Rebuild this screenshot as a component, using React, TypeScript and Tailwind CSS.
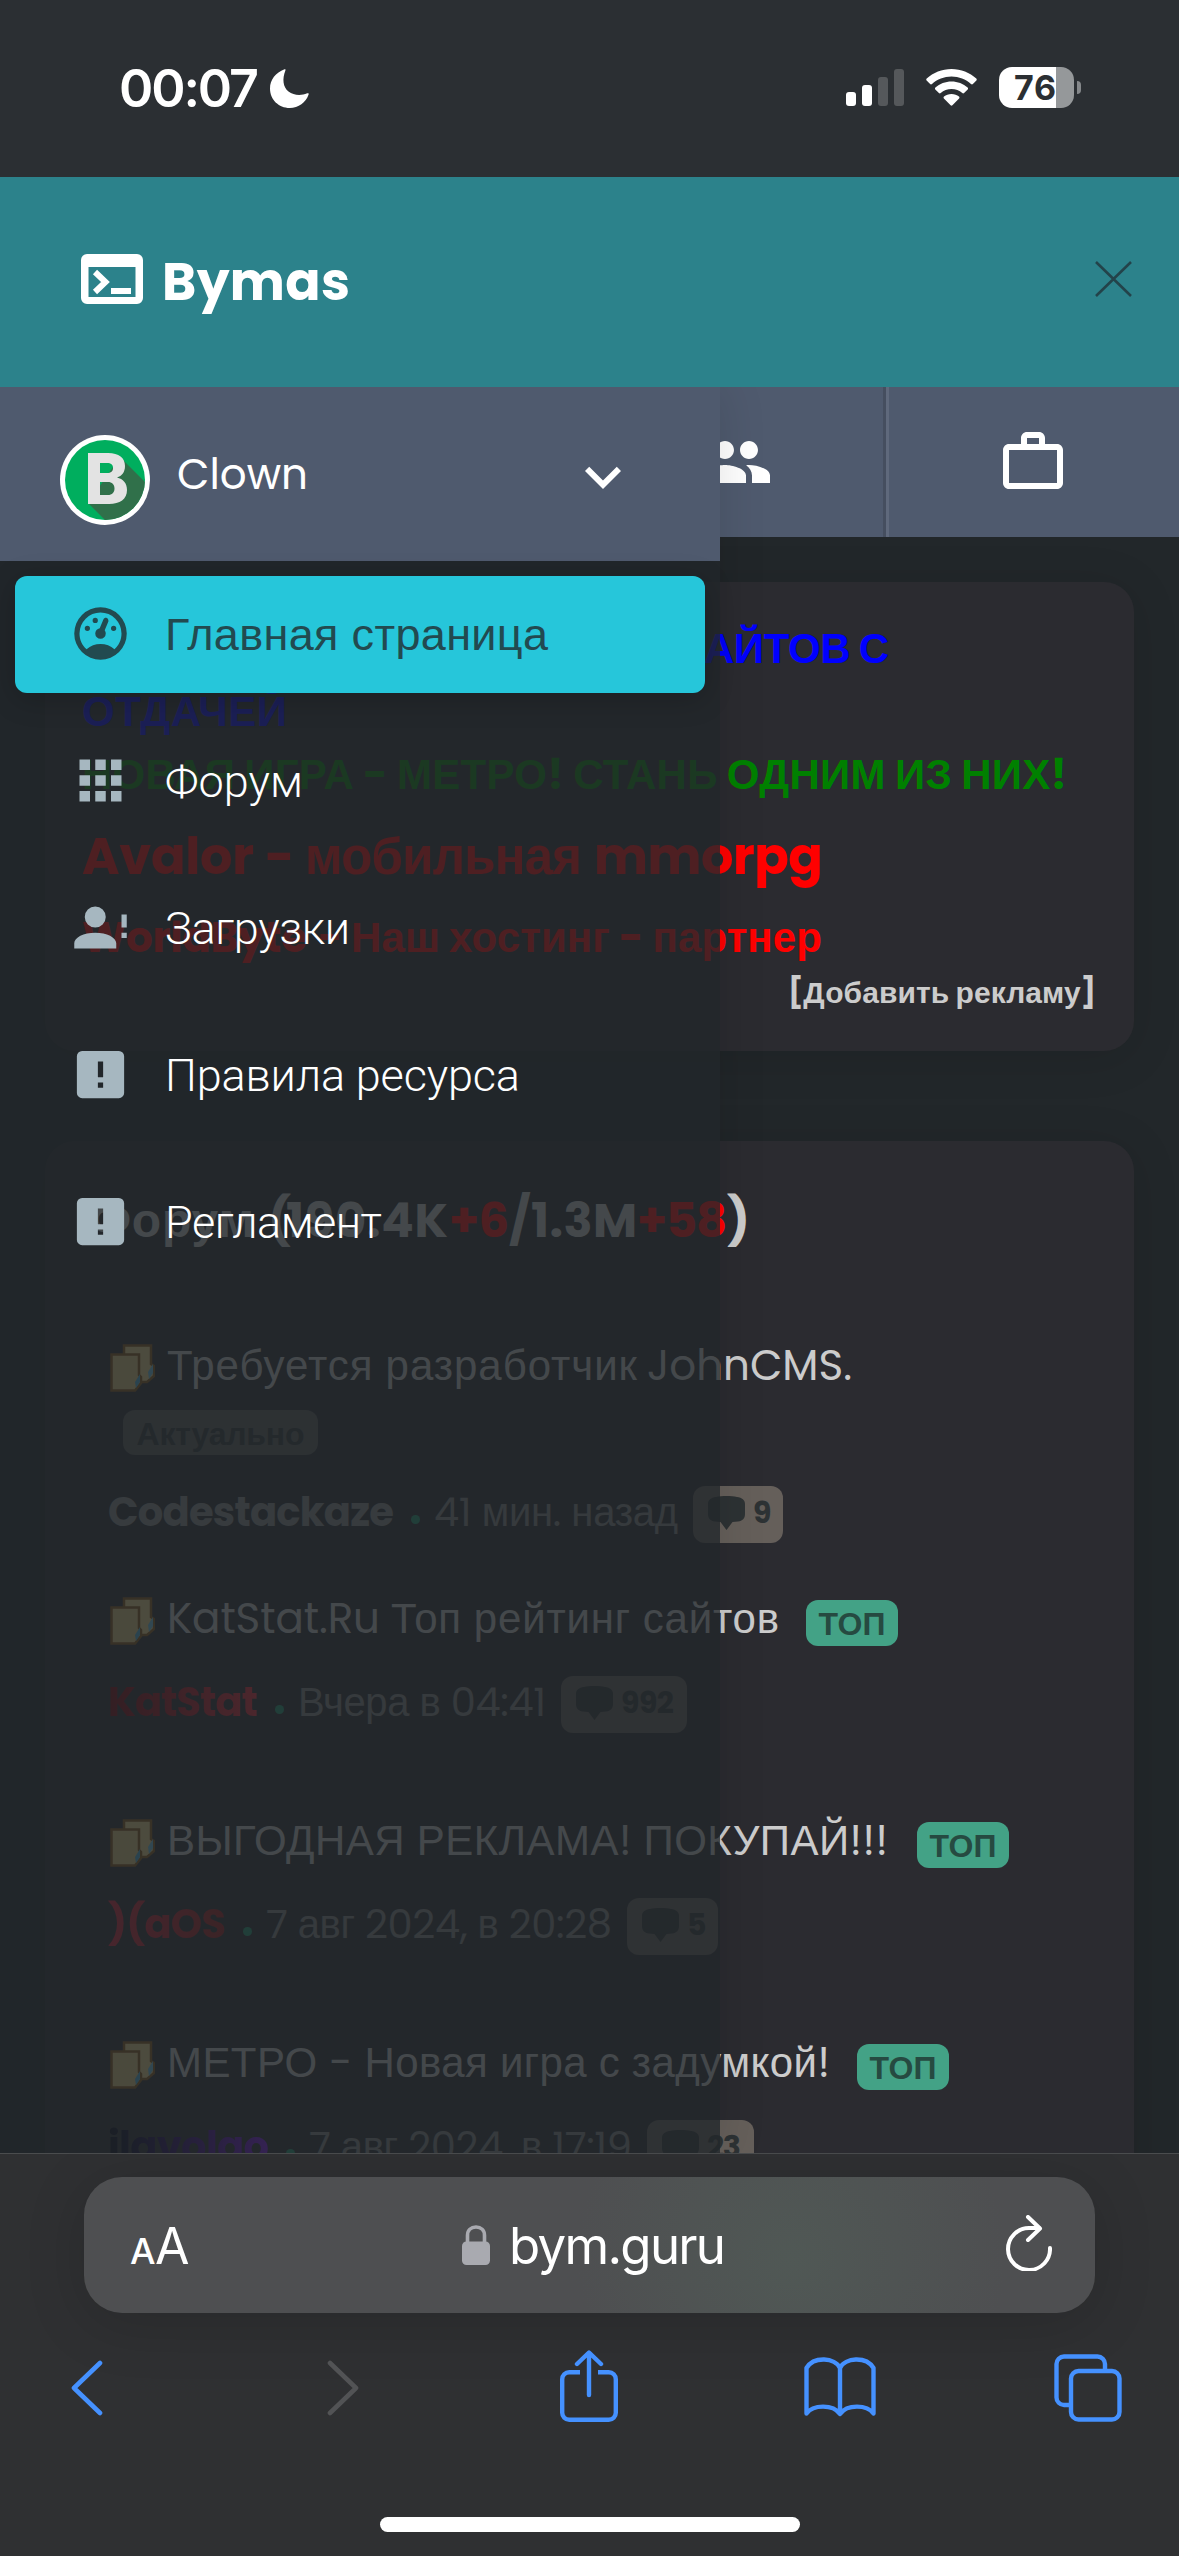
import { useLayoutEffect, useRef, useState } from "react";
import type { ReactNode } from "react";
import { MdPeople, MdWorkOutline, MdKeyboardArrowDown } from "react-icons/md";
import clsx from "clsx";

const inter = "[font-family:Inter,sans-serif]";
// Poppins has no Cyrillic, those letters come from the second family
const poppins = "[font-family:Poppins,'Liberation_Sans',Arial,sans-serif]";

type FitProps = { w: number; children: string; className?: string };

// Spreads or tightens the letters so that the run fills exactly w pixels
function Fit({ w, children, className }: FitProps) {
  const ref = useRef<HTMLSpanElement>(null);
  const [spacing, setSpacing] = useState(0);

  useLayoutEffect(() => {
    const natural = ref.current?.getBoundingClientRect().width ?? w;
    setSpacing((w - natural) / Math.max(children.length - 1, 1));
  }, [w, children]);

  return (
    <span className={clsx("block shrink-0 whitespace-pre", className)} style={{ width: w }}>
      <span ref={ref} style={{ letterSpacing: spacing }}>
        {children}
      </span>
    </span>
  );
}

const icons = {
  gauge:
    "M17.3,18C19,16.5 20,14.4 20,12A8,8 0 0,0 12,4A8,8 0 0,0 4,12C4,14.4 5,16.5 6.7,18C8.2,16.7 10,16 12,16C14,16 15.9,16.7 17.3,18M12,2A10,10 0 0,1 22,12A10,10 0 0,1 12,22A10,10 0 0,1 2,12A10,10 0 0,1 12,2M7,9A1,1 0 0,1 8,10A1,1 0 0,1 7,11A1,1 0 0,1 6,10A1,1 0 0,1 7,9M10,6A1,1 0 0,1 11,7A1,1 0 0,1 10,8A1,1 0 0,1 9,7A1,1 0 0,1 10,6M17,9A1,1 0 0,1 18,10A1,1 0 0,1 17,11A1,1 0 0,1 16,10A1,1 0 0,1 17,9M14.4,6.1C14.9,6.3 15.1,6.9 15,7.4L13.6,10.8C13.8,11.1 14,11.5 14,12A2,2 0 0,1 12,14A2,2 0 0,1 10,12C10,11 10.7,10.2 11.7,10L13.1,6.7C13.3,6.1 13.9,5.9 14.4,6.1Z",
  apps: "M16,20H20V16H16M16,14H20V10H16M10,8H14V4H10M16,8H20V4H16M10,14H14V10H10M4,14H8V10H4M4,20H8V16H4M10,20H14V16H10M4,8H8V4H4V8Z",
  account:
    "M10,4A4,4 0 0,1 14,8A4,4 0 0,1 10,12A4,4 0 0,1 6,8A4,4 0 0,1 10,4M10,14C14.42,14 18,15.79 18,18V20H2V18C2,15.79 5.58,14 10,14M20,12V7H22V12H20M20,16V14H22V16H20Z",
  alert:
    "M5,3H19A2,2 0 0,1 21,5V19A2,2 0 0,1 19,21H5A2,2 0 0,1 3,19V5A2,2 0 0,1 5,3M13,13V7H11V13H13M13,17V15H11V17H13Z",
};

const menu = [
  { icon: icons.gauge, label: "Главная страница", w: 383, active: true },
  { icon: icons.apps, label: "Форум", w: 138 },
  { icon: icons.account, label: "Загрузки", w: 185 },
  { icon: icons.alert, label: "Правила ресурса", w: 355 },
  { icon: icons.alert, label: "Регламент", w: 217 },
];

function StatusBar() {
  return (
    <div className="flex h-[177px] shrink-0 items-start bg-[#2b2f33] pt-[57px] pr-[98px] pl-[119px] text-white">
      <Fit w={140} className={`${inter} text-[52px] leading-[63px] font-semibold`}>
        00:07
      </Fit>
      <svg className="mt-[12px] ml-[11px] h-[39px] w-[39px]" viewBox="0 0 39 39" fill="currentColor">
        <path d="M14.5 0.3C15.3 0 15.8 0.6 15.4 1.4C12 10 13 18 18.500 22.500C23.500 26.500 31 27 37.200 24.300C38.300 23.900 39 24.500 38.600 25.500C35.800 33.500 28.500 39 19.800 39C8.600 39 0 30.500 0 19.500C0 10.800 5.700 3.500 14.500 0.300Z" />
      </svg>
      <svg className="mt-[12px] ml-auto h-[37px] w-[58px]" viewBox="0 0 58 37" fill="currentColor">
        <rect x="0" y="23" width="10" height="14" rx="3" />
        <rect x="16" y="16" width="10" height="21" rx="3" />
        <rect x="32" y="8" width="10" height="29" rx="3" fill="#55585b" />
        <rect x="48" y="0" width="10" height="37" rx="3" fill="#55585b" />
      </svg>
      <svg className="mt-[12px] ml-[22px] h-[37px] w-[51px]" viewBox="0 0 51 37" fill="currentColor">
        <path d="M25.500 0C16 0 7.200 3.600 0.700 9.600C0.100 10.200 0.100 11 0.600 11.500L4.100 15C4.600 15.500 5.400 15.500 6 15C11.200 10.300 18 7.500 25.500 7.500S39.800 10.300 45 15C45.600 15.500 46.400 15.500 46.900 15L50.400 11.500C50.900 11 50.900 10.200 50.300 9.600C43.800 3.600 35 0 25.500 0Z" />
        <path d="M25.500 12.500C19.400 12.500 13.700 14.800 9.400 18.600C8.800 19.100 8.800 19.900 9.300 20.500L12.900 24C13.400 24.500 14.200 24.500 14.700 24.100C17.600 21.600 21.400 20.100 25.500 20.100S33.400 21.600 36.300 24.100C36.800 24.500 37.600 24.500 38.100 24L41.700 20.500C42.200 19.900 42.200 19.100 41.600 18.600C37.300 14.800 31.600 12.500 25.500 12.500Z" />
        <path d="M25.500 25C22.600 25 20 26 18 27.600C17.400 28.100 17.400 28.900 17.900 29.400L24.600 36.300C25.100 36.800 25.900 36.800 26.400 36.300L33.100 29.400C33.600 28.900 33.600 28.100 33 27.600C31 26 28.400 25 25.500 25Z" />
      </svg>
      <div className="mt-[10px] ml-[22px] flex items-center">
        <div className="flex h-[41px] w-[75px] items-center rounded-[13px] bg-[linear-gradient(90deg,#fff_76%,#95989a_76%)] pl-[15px]">
          <Fit w={42} className={`${inter} text-[34px] leading-[41px] font-bold text-[#2b2f33]`}>
            76
          </Fit>
        </div>
        <div className="ml-[3px] h-[13px] w-[4px] rounded-r-full bg-[#85888b]" />
      </div>
    </div>
  );
}

function Header() {
  return (
    <div className="flex h-[210px] shrink-0 items-center bg-[#2c828b] pr-[47px] pl-[81px]">
      <svg className="-mt-[6px] h-[50px] w-[62px]" viewBox="0 0 62 50">
        <path
          fill="#fff"
          fillRule="evenodd"
          d="M6 0H56A6 6 0 0 1 62 6V44A6 6 0 0 1 56 50H6A6 6 0 0 1 0 44V6A6 6 0 0 1 6 0ZM7.500 13V43H54.500V13Z"
        />
        <path d="M14 18L24.500 28L14 38" fill="none" stroke="#fff" strokeWidth="6" />
        <path d="M30 34H50V40H30Z" fill="#fff" />
      </svg>
      <Fit w={188} className={`${poppins} ml-[19px] text-[52px] leading-[76px] font-bold text-white`}>
        Bymas
      </Fit>
      <svg className="-mt-[6px] ml-auto h-[36px] w-[37px]" viewBox="0 0 37 36" fill="none" stroke="#23434a" strokeWidth="2.6">
        <path d="M1 1L36 35M36 1L1 35" />
      </svg>
    </div>
  );
}

function Tabs() {
  return (
    <div className="grid h-[150px] shrink-0 grid-cols-4 bg-[#4f5a6e] text-white">
      <div />
      <div />
      <div className="flex items-center justify-center">
        <MdPeople size={72} />
      </div>
      <div className="ml-[2px] flex items-center justify-center border-l-[3px] border-[#5f697c] pr-[2px] shadow-[-3px_0_0_#454e5f]">
        <MdWorkOutline size={72} />
      </div>
    </div>
  );
}

function AdsCard() {
  return (
    <section
      className={`${poppins} mx-[45px] mt-[45px] h-[469px] shrink-0 rounded-[30px] bg-[#2b2b30] pt-[35px] pr-[38px] pl-[37px] font-bold shadow-[0_6px_48px_rgba(0,0,0,0.12)]`}
    >
      <div className="text-[42px] leading-[63px] text-[#0000ff]">
        <Fit w={214} className="ml-[593px]">
          САЙТОВ С
        </Fit>
        <Fit w={205}>ОТДАЧЕЙ</Fit>
      </div>
      <Fit w={985} className="text-[42px] leading-[63px] text-[#008000]">
        НОВАЯ ИГРА - МЕТРО! СТАНЬ ОДНИМ ИЗ НИХ!
      </Fit>
      <div className="mt-[12px] flex text-[51px] leading-[76px] text-[#ff0000]">
        <Fit w={172}>Avalor</Fit>
        <Fit w={25} className="ml-[11px]">-</Fit>
        <Fit w={277} className="ml-[15px]">мобильная</Fit>
        <Fit w={229} className="ml-[12px]">mmorpg</Fit>
      </div>
      <div className="mt-[12px] flex text-[42px] leading-[63px] text-[#ff0000]">
        <Fit w={225}>WorldByte</Fit>
        <Fit w={20} className="ml-[11px]">-</Fit>
        <Fit w={471} className="ml-[13px]">Наш хостинг - партнер</Fit>
      </div>
      <div className="mt-[1px] flex justify-end text-[30px] leading-[45px] text-[#cccccc]">
        <Fit w={308}>[Добавить рекламу]</Fit>
      </div>
    </section>
  );
}

function Docs() {
  return (
    <svg className="mt-[4px] mr-[12px] ml-[1px] h-[48px] w-[45px] shrink-0" viewBox="0 0 45 48">
      <path d="M14 1.500H41V20L44 22V32L37 38H14Z" fill="#f5d98c" stroke="#8c5a18" strokeWidth="2.500" />
      <path d="M1.500 10.500H29V31L31 33V39L25 46.500H1.500Z" fill="#eccf80" stroke="#8c5a18" strokeWidth="2.500" />
      <path d="M38 28L43 20V29L39 35Z" fill="#6fc7e8" />
      <path d="M25 38L30 30V38L26 44Z" fill="#4db4de" />
    </svg>
  );
}

function Top() {
  return (
    <span className="mt-[8px] flex h-[46px] w-[92px] shrink-0 items-center justify-center rounded-[12px] bg-[#43a286] pt-[2px]">
      <Fit w={67} className={`${poppins} text-[32px] leading-[46px] font-bold text-[#264a41]`}>
        ТОП
      </Fit>
    </span>
  );
}

function Count({ n, w }: { n: string; w: number }) {
  return (
    <span className="mt-[4px] flex h-[57px] shrink-0 items-center rounded-[12px] bg-[#655f5a] pr-[13px] pl-[15px] text-[#2d3234]">
      <svg className="mt-[-3px] h-[34px] w-[37px]" viewBox="0 0 37 34" fill="currentColor">
        <path d="M8 1C14 -0.200 23 -0.200 29 1C34 1.500 37 4 37 8V18C37 22.500 34.500 25 30 25.500L24.500 26L18.500 34L12.500 26L7 25.500C2.500 25 0 22.500 0 18V8C0 4 3 1.500 8 1Z" />
      </svg>
      <Fit w={w} className={`${poppins} ml-[8px] -mt-[4px] text-[30px] leading-[45px] font-bold`}>
        {n}
      </Fit>
    </span>
  );
}

type MetaProps = { author: string; aw: number; tone: string; date: string; dw: number; n: string; nw: number };

function Meta({ author, aw, tone, date, dw, n, nw }: MetaProps) {
  return (
    <div className={`${poppins} flex h-[63px] items-center text-[40px] leading-[65px]`}>
      <Fit w={aw} className={clsx("ml-[-1px] font-bold", tone)}>
        {author}
      </Fit>
      <span className="mt-[13px] ml-[17px] h-[9px] w-[9px] shrink-0 rounded-full bg-[#1f9d72]" />
      <Fit w={dw} className="ml-[14px] text-[#858585]">
        {date}
      </Fit>
      <span className="w-[15px] shrink-0" />
      <Count n={n} w={nw} />
    </div>
  );
}

function Title({ children }: { children: ReactNode }) {
  return (
    <div className={`${poppins} flex h-[63px] items-center text-[42px] leading-[63px] text-[#cccccc]`}>{children}</div>
  );
}

function ForumCard() {
  return (
    <section className="mx-[45px] mt-[90px] h-[1100px] shrink-0 rounded-[30px] bg-[#2b2b30] pt-[44px] shadow-[0_6px_48px_rgba(0,0,0,0.12)]">
      <h2 className={`${poppins} flex pl-[45px] text-[48px] leading-[72px] font-bold text-[#cccccc]`}>
        <Fit w={164}>Форум</Fit>
        <Fit w={18} className="ml-[14px]">(</Fit>
        <Fit w={162}>190.4K</Fit>
        <Fit w={60} className="ml-[1px] text-[#ff0000]">+6</Fit>
        <Fit w={21}>/</Fit>
        <Fit w={106} className="ml-[1px]">1.3M</Fit>
        <Fit w={90} className="text-[#ff0000]">+58</Fit>
        <Fit w={20}>)</Fit>
      </h2>
      <ul className="mt-[77px] pl-[64px]">
        <li className="h-[253px]">
          <Title>
            <Docs />
            <Fit w={470}>Требуется разработчик</Fit>
            <Fit w={205} className="ml-[10px]">JohnCMS.</Fit>
          </Title>
          <div className="mt-[13px] mb-[26px] ml-[14px] flex h-[45px] w-[195px] justify-center rounded-[12px] bg-[#595957]">
            <Fit w={168} className={`${poppins} text-[32px] leading-[47px] font-bold text-[#2d3234]`}>
              Актуально
            </Fit>
          </div>
          <Meta author="Codestackaze" aw={286} tone="text-[#8c8c8c]" date="41 мин. назад" dw={244} n="9" nw={17} />
        </li>
        <li className="h-[222px]">
          <Title>
            <Docs />
            <Fit w={213}>KatStat.Ru</Fit>
            <Fit w={388} className="mr-[27px] ml-[11px]">Топ рейтинг сайтов</Fit>
            <Top />
          </Title>
          <div className="h-[21px]" />
          <Meta
            author="KatStat"
            aw={150}
            tone="bg-linear-to-r from-[#7a0008] to-[#f02838] bg-clip-text text-transparent"
            date="Вчера в 04:41"
            dw={248}
            n="992"
            nw={53}
          />
        </li>
        <li className="h-[222px]">
          <Title>
            <Docs />
            <Fit w={721} className="mr-[29px]">ВЫГОДНАЯ РЕКЛАМА! ПОКУПАЙ!!!</Fit>
            <Top />
          </Title>
          <div className="h-[21px]" />
          <Meta
            author=")(aOS"
            aw={118}
            tone="bg-linear-to-r from-[#d82038] to-[#a01818] bg-clip-text text-transparent"
            date="7 авг 2024, в 20:28"
            dw={346}
            n="5"
            nw={18}
          />
        </li>
        <li className="h-[222px]">
          <Title>
            <Docs />
            <Fit w={663} className="mr-[27px]">МЕТРО - Новая игра с задумкой!</Fit>
            <Top />
          </Title>
          <div className="h-[21px]" />
          <Meta
            author="ilavolgo"
            aw={161}
            tone="bg-linear-to-r from-[#000010] to-[#8010f0] bg-clip-text text-transparent"
            date="7 авг 2024, в 17:19"
            dw={323}
            n="23"
            nw={34}
          />
        </li>
      </ul>
    </section>
  );
}

function Avatar() {
  return (
    <svg className="mt-[12px] h-[90px] w-[90px]" viewBox="0 0 90 90">
      <defs>
        <clipPath id="face">
          <circle cx="45" cy="45" r="40" />
        </clipPath>
      </defs>
      <circle cx="45" cy="45" r="45" fill="#fff" />
      <g clipPath="url(#face)">
        <rect width="90" height="90" fill="#00ae5e" />
        <path d="M28 68L60 22L90 52V90H50Z" fill="#30704a" />
        <path
          fill="#e3e3e3"
          fillRule="evenodd"
          d="M28 18H48C59 18 65 23 65 31C65 37 62 41 57 42.500C63 44 67 48 67 55C67 64 60 69 49 69H28ZM40 28V38H47C51 38 53 36.500 53 33C53 29.500 51 28 47 28ZM40 47V60H48C52 60 54.500 57.500 54.500 53.500C54.500 49.500 52 47 48 47Z"
        />
      </g>
    </svg>
  );
}

function Drawer() {
  return (
    <aside className="absolute inset-y-0 left-0 w-[720px] bg-[#22272a]/80 shadow-[0_0_45px_rgba(0,0,0,0.12)]">
      <div className="flex h-[174px] items-center bg-[#4f5a6e] pr-[81px] pl-[60px] text-white">
        <Avatar />
        <Fit w={131} className={`${poppins} ml-[27px] text-[42px] leading-[63px]`}>
          Clown
        </Fit>
        <MdKeyboardArrowDown size={72} className="mt-[6px] ml-auto" />
      </div>
      <nav className="flex flex-col gap-[30px] px-[15px] pt-[15px]">
        {menu.map((item) => (
          <a
            key={item.label}
            className={clsx(
              "flex h-[117px] items-center rounded-[12px] pl-[54px] text-[45px] leading-[68px]",
              item.active
                ? "bg-[#26c6da] text-[#224a50] shadow-[0_6px_30px_rgba(0,0,0,0.2)] [font-family:'Liberation_Sans',Arial,sans-serif]"
                : "font-light text-white [font-family:Roboto,sans-serif]"
            )}
          >
            <svg
              className={clsx("-mt-[2px] h-[63px] w-[63px]", !item.active && "text-[#a6b7c0]")}
              viewBox="0 0 24 24"
              fill="currentColor"
            >
              <path d={item.icon} />
            </svg>
            <Fit w={item.w} className="ml-[33px]">
              {item.label}
            </Fit>
          </a>
        ))}
      </nav>
    </aside>
  );
}

function SafariBar() {
  return (
    <div className="flex h-[403px] shrink-0 flex-col border-t border-[#4a4c4e] bg-[#2f3032] px-[70px] pt-[23px]">
      <div className="mx-[14px] flex h-[136px] items-center rounded-[38px] bg-[#4e4f51] bg-[radial-gradient(circle_at_70%_60%,#505855_0%,#4e4f51_30%)] pr-[43px] pl-[46px] text-white shadow-[0_10px_60px_rgba(0,0,0,0.15)]">
        <div className={`${inter} flex items-baseline pt-[6px]`}>
          <Fit w={25} className="text-[36px] leading-[60px] font-medium">A</Fit>
          <Fit w={33} className="text-[50px] leading-[60px]">A</Fit>
        </div>
        <svg className="ml-[274px] h-[40px] w-[28px]" viewBox="0 0 28 40">
          <path d="M5.500 18V10.500C5.500 5 9 2 14 2S22.500 5 22.500 10.500V18" fill="none" stroke="#a9aab0" strokeWidth="3.600" />
          <rect y="16.500" width="28" height="23.500" rx="4.500" fill="#a9aab0" />
        </svg>
        <Fit w={217} className={`${inter} mt-[2px] ml-[19px] text-[51px] leading-[62px]`}>
          bym.guru
        </Fit>
        <svg
          className="-mt-[4px] ml-auto h-[56px] w-[46px]"
          viewBox="0 0 46 56"
          fill="none"
          stroke="#fff"
          strokeWidth="4"
          strokeLinecap="round"
          strokeLinejoin="round"
        >
          <path d="M44 33A21 21 0 1 1 23 13H33" />
          <path d="M22 2L34 13.500L22 25" />
        </svg>
      </div>
      <div className="mt-[36px] flex h-[76px] items-center text-[#4591ff]">
        <svg className="mt-[2px] h-[56px] w-[34px] shrink-0" viewBox="0 0 34 56" fill="none" stroke="currentColor" strokeWidth="4.600" strokeLinecap="round" strokeLinejoin="round">
          <path d="M30 3L4 28L30 53" />
        </svg>
        <svg className="mt-[2px] ml-[222px] h-[56px] w-[34px] shrink-0" viewBox="0 0 34 56" fill="none" stroke="#525355" strokeWidth="4.600" strokeLinecap="round" strokeLinejoin="round">
          <path d="M4 3L30 28L4 53" />
        </svg>
        <svg className="-mt-[2px] ml-[200px] h-[72px] w-[58px] shrink-0" viewBox="0 0 58 72" fill="none" stroke="currentColor" strokeWidth="4.400">
          <path d="M20 22.200H9.200A7 7 0 0 0 2.200 29.200V62.800A7 7 0 0 0 9.200 69.800H48.800A7 7 0 0 0 55.800 62.800V29.200A7 7 0 0 0 48.800 22.200H38" />
          <path d="M29 45V3M17 14L29 2.500L41 14" strokeLinecap="round" strokeLinejoin="round" />
        </svg>
        <svg className="ml-[186px] h-[60px] w-[72px] shrink-0" viewBox="0 0 72 60" fill="none" stroke="currentColor" strokeWidth="4.400" strokeLinejoin="round">
          <path d="M36 11C31 0.500 10 -1 2.500 11V56.500C9 47.500 29 47 36 57C43 47 63 47.500 69.500 56.500V11C62 -1 41 0.500 36 11ZM36 11V57" />
        </svg>
        <svg className="mt-[1px] ml-[178px] h-[68px] w-[68px] shrink-0" viewBox="0 0 68 68" fill="none" stroke="currentColor" strokeWidth="4.400">
          <path d="M16 51H10A7.500 7.500 0 0 1 2.500 43.500V10A7.500 7.500 0 0 1 10 2.500H43.500A7.500 7.500 0 0 1 51 10V16" />
          <rect x="17" y="17" width="48.500" height="48.500" rx="7.500" />
        </svg>
      </div>
      <div className="mx-auto mt-auto mb-[24px] h-[15px] w-[420px] rounded-full bg-white" />
    </div>
  );
}

export default function App() {
  return (
    <div className="flex h-[2556px] w-[1179px] flex-col overflow-hidden bg-[#22272a]">
      <StatusBar />
      <Header />
      <main className="relative flex h-[1766px] shrink-0 flex-col overflow-hidden">
        <Tabs />
        <AdsCard />
        <ForumCard />
        <Drawer />
      </main>
      <SafariBar />
    </div>
  );
}
